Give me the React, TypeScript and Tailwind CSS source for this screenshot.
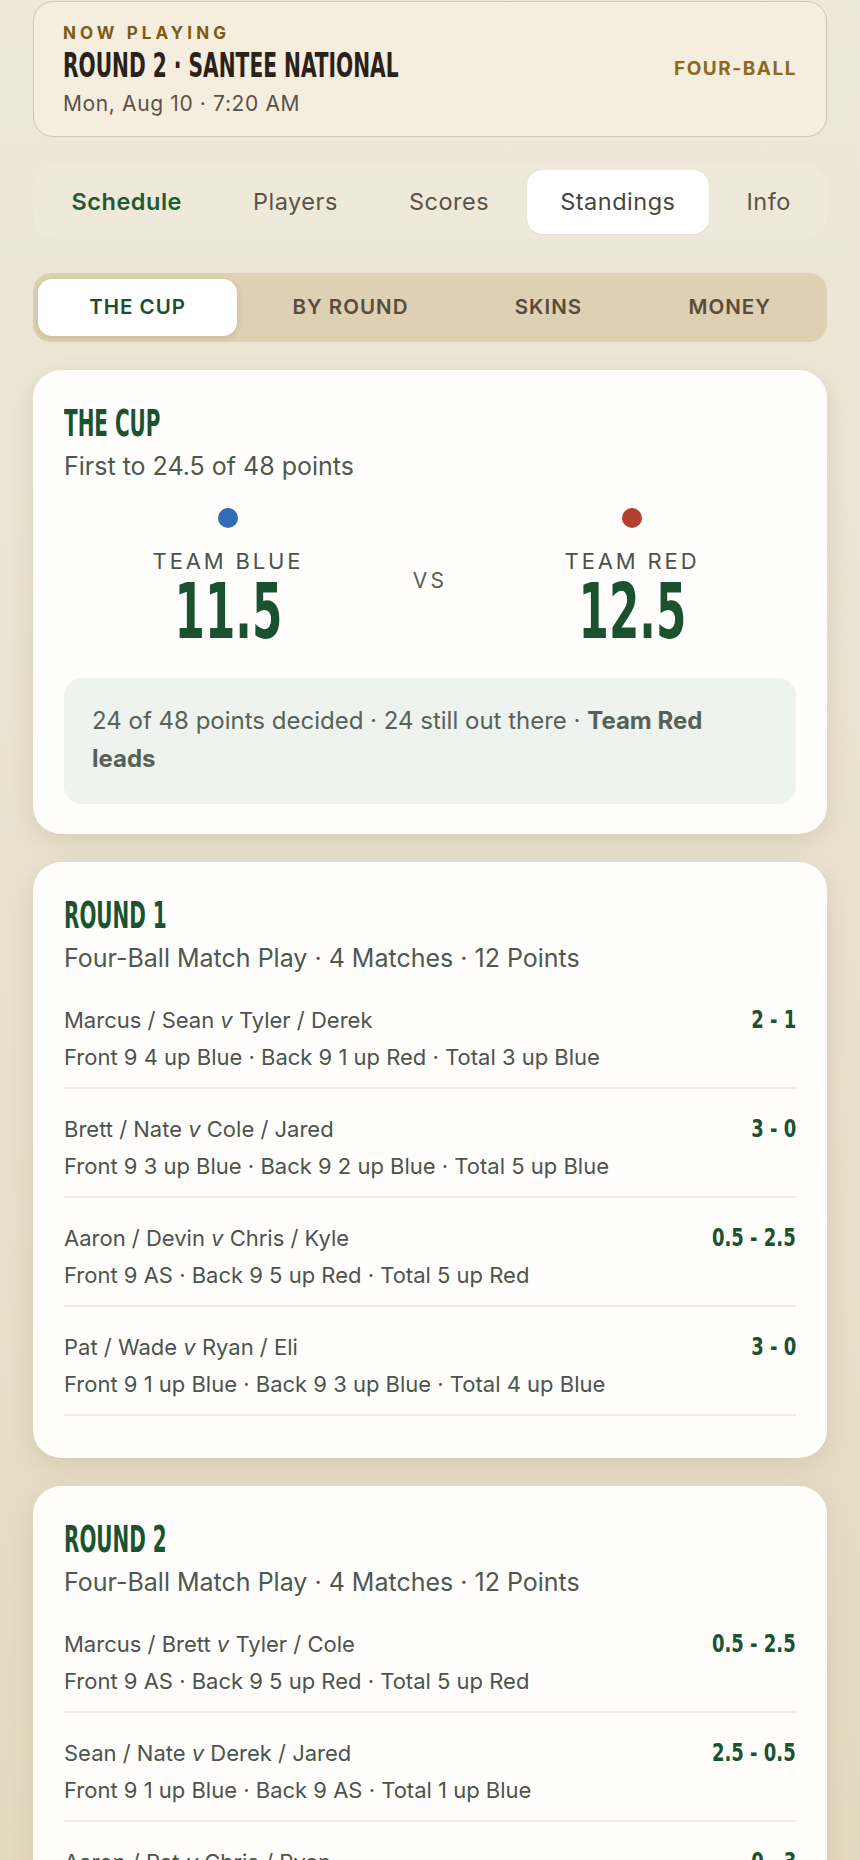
import React from 'react'

type Match = {
  teamA: string
  teamB: string
  detail: string
  score: string
}

type Round = {
  title: string
  subtitle: string
  matches: Match[]
}

const rounds: Round[] = [
  {
    title: 'ROUND 1',
    subtitle: 'Four-Ball Match Play · 4 Matches · 12 Points',
    matches: [
      { teamA: 'Marcus / Sean', teamB: 'Tyler / Derek', detail: 'Front 9 4 up Blue · Back 9 1 up Red · Total 3 up Blue', score: '2 - 1' },
      { teamA: 'Brett / Nate', teamB: 'Cole / Jared', detail: 'Front 9 3 up Blue · Back 9 2 up Blue · Total 5 up Blue', score: '3 - 0' },
      { teamA: 'Aaron / Devin', teamB: 'Chris / Kyle', detail: 'Front 9 AS · Back 9 5 up Red · Total 5 up Red', score: '0.5 - 2.5' },
      { teamA: 'Pat / Wade', teamB: 'Ryan / Eli', detail: 'Front 9 1 up Blue · Back 9 3 up Blue · Total 4 up Blue', score: '3 - 0' },
    ],
  },
  {
    title: 'ROUND 2',
    subtitle: 'Four-Ball Match Play · 4 Matches · 12 Points',
    matches: [
      { teamA: 'Marcus / Brett', teamB: 'Tyler / Cole', detail: 'Front 9 AS · Back 9 5 up Red · Total 5 up Red', score: '0.5 - 2.5' },
      { teamA: 'Sean / Nate', teamB: 'Derek / Jared', detail: 'Front 9 1 up Blue · Back 9 AS · Total 1 up Blue', score: '2.5 - 0.5' },
      { teamA: 'Aaron / Pat', teamB: 'Chris / Ryan', detail: 'Front 9 2 up Red · Back 9 1 up Red · Total 3 up Red', score: '0 - 3' },
      { teamA: 'Devin / Wade', teamB: 'Kyle / Eli', detail: 'Front 9 3 up Red · Back 9 2 up Red · Total 5 up Red', score: '0 - 3' },
    ],
  },
]

const navTabs = ['Schedule', 'Players', 'Scores', 'Standings', 'Info']
const subTabs = ['THE CUP', 'BY ROUND', 'SKINS', 'MONEY']

// condensed display face (stand-in for a Bebas-style font)
const display = "font-['DejaVu_Sans_Condensed',sans-serif] font-bold"

function MatchRow({ match }: { match: Match }) {
  return (
    <div className="flex items-start justify-between border-b-2 border-[#ecebe7] pt-[26px] pb-[16px]">
      <div>
        <div className="text-[22px] leading-[28px] text-[#4b544d]">
          {match.teamA} <span className="italic">v</span> {match.teamB}
        </div>
        <div className="mt-[9px] text-[22px] leading-[28px] text-[#4b544d]">{match.detail}</div>
      </div>
      <div className={`${display} inline-block origin-right scale-x-[0.8] text-[25px] leading-[28px] whitespace-nowrap text-[#1b5331]`}>
        {match.score}
      </div>
    </div>
  )
}

function RoundCard({ round }: { round: Round }) {
  return (
    <div className="rounded-[28px] bg-[#fffefc] px-[31px] pt-[35px] pb-[42px] shadow-[0_8px_24px_rgba(110,90,50,0.14)]">
      <div className={`${display} inline-block origin-left scale-x-[0.6] text-[37px] leading-none text-[#1b5331]`}>
        {round.title}
      </div>
      <div className="mt-[9px] text-[25px] leading-[30px] text-[#4d5850]">{round.subtitle}</div>
      <div className="mt-[7px]">
        {round.matches.map((m, i) => (
          <MatchRow key={i} match={m} />
        ))}
      </div>
    </div>
  )
}

function TeamScore({ name, score, dot }: { name: string; score: string; dot: string }) {
  return (
    <div className="flex flex-col items-center">
      <div className={`h-[20px] w-[20px] rounded-full ${dot}`} />
      <div className="mt-[19px] text-[22px] leading-[28px] tracking-[0.13em] text-[#4a524c]">{name}</div>
      <div className={`${display} -mt-[2px] scale-x-[0.63] text-[77px] leading-none text-[#1a5230]`}>{score}</div>
    </div>
  )
}

export default function App() {
  return (
    <div className="min-h-screen bg-gradient-to-b from-[#eee8d9] to-[#e3d8bf] font-['Inter',sans-serif]">
      <div className="px-[33px] pt-px pb-10">
        {/* now playing */}
        <div className="flex items-center justify-between rounded-[20px] border-[1.5px] border-[#cfc5ae] bg-[#f5eddd] px-[29px] pt-[21px] pb-[20px]">
          <div>
            <div className="text-[17px] leading-[20px] font-bold tracking-[0.24em] text-[#7b5c12]">NOW PLAYING</div>
            <div className={`${display} mt-[6px] origin-left scale-x-[0.68] text-[33px] leading-none whitespace-nowrap text-[#2a2118]`}>
              ROUND 2 · SANTEE NATIONAL
            </div>
            <div className="mt-[10px] text-[21px] leading-[24px] tracking-[0.03em] text-[#5a5248]">Mon, Aug 10 · 7:20 AM</div>
          </div>
          <div className="text-[19px] font-bold tracking-[0.08em] text-[#8b6a1d]">FOUR-BALL</div>
        </div>

        {/* main nav */}
        <div className="mt-[28px] flex gap-1 rounded-[22px] bg-white/10 p-[5px]">
          {navTabs.map((t) => (
            <div
              key={t}
              className={`flex h-[64px] items-center rounded-[16px] px-[33.5px] text-[23.5px] tracking-[0.022em] whitespace-nowrap ${
                t === 'Standings'
                  ? 'bg-white text-[#4a443c] shadow-[0_1px_3px_rgba(0,0,0,0.05)]'
                  : t === 'Schedule'
                  ? 'font-semibold text-[#1f5a35]'
                  : 'text-[#5a5247]'
              }`}
            >
              {t}
            </div>
          ))}
        </div>

        {/* sub tabs */}
        <div className="mt-[34px] flex gap-[4px] rounded-[18px] bg-[#ddd0b3] px-[5px] py-[6px]">
          {subTabs.map((t) => (
            <div
              key={t}
              className={`flex h-[57px] flex-auto items-center justify-center rounded-[14px] text-[20.5px] font-semibold tracking-[0.05em] ${
                t === 'THE CUP' ? 'bg-white text-[#1c4f2e] shadow-[0_2px_6px_rgba(90,70,30,0.15)]' : 'text-[#5a4c3a]'
              }`}
            >
              {t}
            </div>
          ))}
        </div>

        {/* the cup */}
        <div className="mt-[28px] rounded-[28px] bg-[#fffefc] px-[31px] pt-[35px] pb-[30px] shadow-[0_8px_24px_rgba(110,90,50,0.14)]">
          <div className={`${display} inline-block origin-left scale-x-[0.6] text-[37px] leading-none text-[#1b5331]`}>
            THE CUP
          </div>
          <div className="mt-[9px] text-[25px] leading-[30px] text-[#4d5850]">First to 24.5 of 48 points</div>
          <div className="mt-[27px] grid grid-cols-[1fr_76px_1fr] items-center">
            <TeamScore name="TEAM BLUE" score="11.5" dot="bg-[#2f6db5]" />
            <div className="pt-[4px] text-center text-[21px] tracking-[0.15em] text-[#565d58]">VS</div>
            <TeamScore name="TEAM RED" score="12.5" dot="bg-[#b3412f]" />
          </div>
          <div className="mt-[28px] rounded-[18px] bg-[#eef3ef] pt-[24px] pr-[40px] pb-[26px] pl-[28px] text-[24px] leading-[38px] text-[#566258]">
            24 of 48 points decided · 24 still out there · <span className="font-bold">Team Red leads</span>
          </div>
        </div>

        <div className="mt-[28px] flex flex-col gap-[28px]">
          {rounds.map((r) => (
            <RoundCard key={r.title} round={r} />
          ))}
        </div>
      </div>
    </div>
  )
}
